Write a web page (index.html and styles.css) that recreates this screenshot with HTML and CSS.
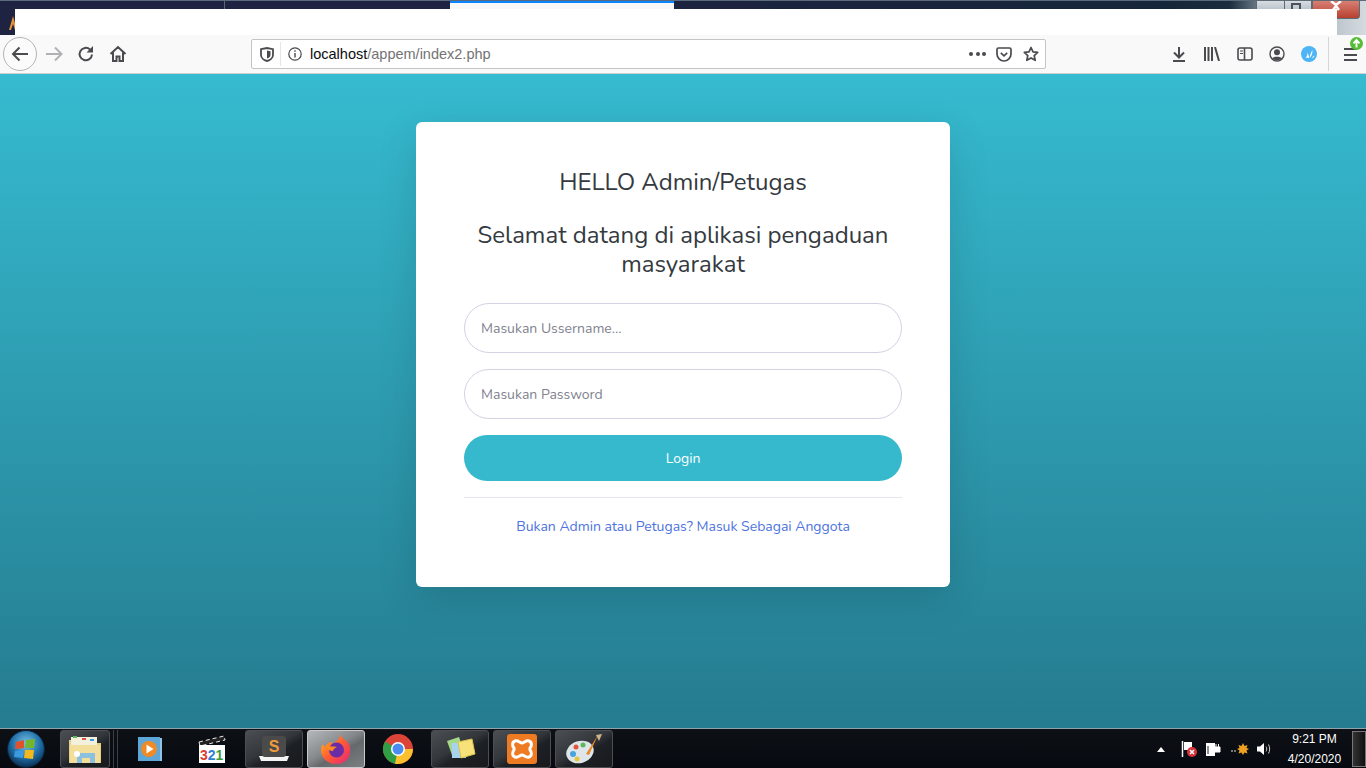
FILE: index.html
```html
<!DOCTYPE html>
<html lang="id">
<head>
<meta charset="utf-8">
<title>Login</title>
<link rel="stylesheet" href="styles.css">
</head>
<body>
<div class="screen">
  <header class="chrome">
    <div class="titlebar">
      <div class="tabstrip">
        <i class="tab-line tl-a"></i><i class="tab-line tl-b"></i>
        <div class="active-tab"></div>
        <div class="winbtns">
          <span class="wb wb-min"></span>
          <span class="wb wb-max"><i></i></span>
          <span class="wb wb-close">
            <svg width="14" height="10" viewBox="0 0 14 10"><path d="M2 0l5 4 5-4M4 9l3-4 3 4" fill="none" stroke="#fff" stroke-width="2.4"/></svg>
          </span>
        </div>
      </div>
      <div class="whiteband">
        <svg class="app-mark" width="8" height="14" viewBox="0 0 8 14"><path d="M4 0L8 14H6L4 8 2 14H0z" fill="#e0913a"/></svg>
        <div class="whitefill"></div>
      </div>
    </div>
    <div class="toolbar">
      <div class="backbtn">
        <svg width="22" height="22" viewBox="0 0 22 22"><path d="M19 11H4M10.500 4.500L4 11l6.500 6.500" fill="none" stroke="#4a4a4f" stroke-width="2"/></svg>
      </div>
      <svg class="tb tb-fwd" width="20" height="20" viewBox="0 0 20 20"><path d="M2 10h15M11 3.500L17.500 10 11 16.500" fill="none" stroke="#b1b1b3" stroke-width="2"/></svg>
      <svg class="tb tb-reload" width="18" height="18" viewBox="0 0 18 18"><path d="M15 9.500A6.200 6.200 0 1 1 13 4.500" fill="none" stroke="#4a4a4f" stroke-width="2"/><path d="M16 1v6.500H9.500z" fill="#4a4a4f"/></svg>
      <svg class="tb tb-home" width="18" height="18" viewBox="0 0 18 18"><path d="M1.500 9L9 2l7.500 7M4 7.500V16h3.500v-4.500h3V16H14V7.500" fill="none" stroke="#4a4a4f" stroke-width="2"/></svg>
      <div class="urlbar">
        <svg class="shield" width="14" height="15" viewBox="0 0 14 15"><path d="M1 2.200L7 1l6 1.200V8c0 3-3 5.300-6 6-3-.7-6-3-6-6z" fill="none" stroke="#4a4a4f" stroke-width="1.800"/><path d="M7 3.500l3.500.7V8c0 1.700-1.700 3-3.500 3.500z" fill="#4a4a4f"/></svg>
        <i class="url-sep"></i>
        <svg class="info" width="14" height="14" viewBox="0 0 14 14"><circle cx="7" cy="7" r="6.200" fill="none" stroke="#4a4a4f" stroke-width="1.200"/><path d="M7 6v4.500M7 3.200v1.600" stroke="#4a4a4f" stroke-width="1.400"/></svg>
        <span class="url"><b>localhost</b>/appem/index2.php</span>
        <span class="url-dots"><i></i><i></i><i></i></span>
        <svg class="pocket" width="16" height="15" viewBox="0 0 16 15"><path d="M1 2.500C1 1.500 1.700 1 2.500 1h11c.8 0 1.500.5 1.500 1.500V7c0 3.700-3.200 7-7 7S1 10.700 1 7z" fill="none" stroke="#4a4a4f" stroke-width="1.700"/><path d="M4.800 5.800L8 8.800l3.200-3" fill="none" stroke="#4a4a4f" stroke-width="1.700"/></svg>
        <svg class="star" width="16" height="16" viewBox="0 0 16 16"><path d="M8 1.500l2 4.400 4.700.5-3.500 3.200 1 4.700L8 11.900l-4.200 2.400 1-4.700L1.300 6.400 6 5.900z" fill="none" stroke="#4a4a4f" stroke-width="1.700" stroke-linejoin="round"/></svg>
      </div>
      <div class="tools">
        <svg class="t-dl" width="14" height="16" viewBox="0 0 14 16"><path d="M7 1v10M2 6.500L7 11.500l5-5M1 15h12" fill="none" stroke="#4a4a4f" stroke-width="2"/></svg>
        <svg class="t-lib" width="16" height="14" viewBox="0 0 16 14"><path d="M1 0v14M4.500 0v14M8 0v14M11 0l4 14" fill="none" stroke="#4a4a4f" stroke-width="2"/></svg>
        <svg class="t-side" width="16" height="14" viewBox="0 0 16 14"><rect x="1" y="1" width="14" height="12" rx="2" fill="none" stroke="#4a4a4f" stroke-width="1.600"/><path d="M7.500 1v12" stroke="#4a4a4f" stroke-width="1.600"/><path d="M3 4h3M3 6.500h3" stroke="#4a4a4f"/></svg>
        <svg class="t-acct" width="16" height="16" viewBox="0 0 16 16"><circle cx="8" cy="8" r="7" fill="none" stroke="#4a4a4f" stroke-width="1.400"/><circle cx="8" cy="6.200" r="3" fill="#4a4a4f"/><path d="M3 12.500C4 10 12 10 13 12.500 11 14.600 5 14.600 3 12.500z" fill="#4a4a4f"/></svg>
        <svg class="t-ext" width="16" height="16" viewBox="0 0 16 16"><circle cx="8" cy="8" r="8" fill="#4db4f5"/><path d="M4 11.500C5.500 11.500 6.500 10 6.500 6.500 7.500 9 8 10 8 12zM8.500 12C9 9 10 6 11.500 4 11.500 7 11 10 8.500 12zM11 12c.5-1 1.500-2 2.500-2.500-.3 1.500-1 2.200-2.500 2.500z" fill="#fff"/></svg>
        <i class="tool-sep"></i>
        <div class="menu">
          <span class="bars"><i></i><i></i><i></i></span>
          <svg class="update" width="13" height="13" viewBox="0 0 13 13"><circle cx="6.500" cy="6.500" r="6.500" fill="#57bd35"/><path d="M6.500 10.500V3.500M3.500 6.300L6.500 3l3 3.300" fill="none" stroke="#fff" stroke-width="1.900"/></svg>
        </div>
      </div>
    </div>
  </header>

  <main class="page">
    <section class="card">
      <h1 class="hello">HELLO Admin/Petugas</h1>
      <h2 class="welcome">Selamat datang di aplikasi pengaduan masyarakat</h2>
      <form class="form">
        <input class="field" type="text" placeholder="Masukan Ussername...">
        <input class="field" type="password" placeholder="Masukan Password">
        <button class="login" type="button">Login</button>
      </form>
      <hr class="rule">
      <a class="member" href="#">Bukan Admin atau Petugas? Masuk Sebagai Anggota</a>
    </section>
  </main>

  <footer class="taskbar">
    <div class="start">
      <svg width="40" height="40" viewBox="0 0 40 40">
        <defs><radialGradient id="orb" cx="50%" cy="35%" r="65%"><stop offset="0" stop-color="#7cc4e8"/><stop offset=".6" stop-color="#1d6da6"/><stop offset="1" stop-color="#0c2d52"/></radialGradient></defs>
        <circle cx="20" cy="20" r="18.500" fill="url(#orb)" stroke="#0a2238"/>
        <path d="M10 13l8-2v8l-9 1z" fill="#e2512c"/><path d="M20 11l9-1-1 9-9 0z" fill="#74b72c"/><path d="M9 22l9-1-1 8-9-1z" fill="#3b9ae0"/><path d="M19 21l9 0-1 9-9-1z" fill="#f3b81e"/>
      </svg>
    </div>
    <div class="tbtn tbtn-first">
      <svg width="34" height="32" viewBox="0 0 34 32"><path d="M1 7h11l2 3h19v20H1z" fill="#e8cf7f"/><rect x="3" y="4" width="26" height="10" fill="#f3f0dc"/><rect x="5" y="3" width="4" height="2" fill="#5cb85c"/><rect x="14" y="5" width="4" height="2" fill="#d9534f"/><rect x="22" y="6" width="4" height="2" fill="#3b9ae0"/><path d="M2 12h30v18H2z" fill="#f3df9b"/><path d="M9 30v-10h18v10h-5v-5h-8v5z" fill="#8cc0df"/><circle cx="9" cy="21" r="3" fill="#fff"/></svg>
    </div>
    <i class="tsep"></i>
    <div class="tslot">
      <svg width="26" height="28" viewBox="0 0 26 28"><rect x="5" y="3" width="20" height="23" fill="#8fc3e6"/><rect x="1" y="2" width="22" height="24" fill="#5ca7d8"/><circle cx="12" cy="14" r="8" fill="#f08a24"/><path d="M9.500 9.500l7 4.500-7 4.500z" fill="#fff"/></svg>
    </div>
    <div class="tslot tslot-mpc">
      <svg width="30" height="30" viewBox="0 0 30 30"><path d="M2 8L27 2l1 4L3 12z" fill="#222" stroke="#eee" stroke-dasharray="4 3"/><rect x="2" y="11" width="26" height="18" fill="#fff"/><text x="3" y="26" class="mpc-num"><tspan fill="#d9402f">3</tspan><tspan fill="#2f7fd0">2</tspan><tspan fill="#3f9c3a">1</tspan></text></svg>
    </div>
    <div class="tbtn">
      <svg width="32" height="30" viewBox="0 0 32 30"><path d="M1 22l2 5h26l2-5z" fill="#f4f4f4"/><rect x="4" y="2" width="24" height="21" rx="3" fill="#4a4a4a"/><text x="16" y="18" class="sublime">S</text></svg>
    </div>
    <div class="tbtn tbtn-active">
      <svg width="32" height="32" viewBox="0 0 32 32">
        <defs><linearGradient id="fx" x1="0" y1="0" x2="1" y2="1"><stop offset="0" stop-color="#ffc21f"/><stop offset=".5" stop-color="#ff5b32"/><stop offset="1" stop-color="#e8247d"/></linearGradient></defs>
        <path d="M20 1c1 4 6 6 9 10 3 7 1 20-13 20C7 31 1 24 1 17c0-3 1-5 2-6 0 1 1 2 2 3 1-3 4-5 7-5-1 1 0 1 1 2 3-3 7-4 7-10z" fill="url(#fx)"/><circle cx="16.500" cy="17" r="7.500" fill="#6b2ca5"/><path d="M6 12c3 2 8 1 11 2-2 1-4 2-4 4-3 0-6-2-7-6z" fill="#ff8a1f"/>
      </svg>
    </div>
    <div class="tslot">
      <svg width="32" height="32" viewBox="0 0 32 32"><circle cx="16" cy="16" r="15" fill="#db4437"/><path d="M16 16L3 8.500A15 15 0 0 0 16 31z" fill="#2f9e44"/><path d="M16 16h15A15 15 0 0 1 13 30.700z" fill="#fbc02d"/><circle cx="16" cy="16" r="7" fill="#fff"/><circle cx="16" cy="16" r="5.500" fill="#4a8cf0"/></svg>
    </div>
    <div class="tbtn">
      <svg width="32" height="28" viewBox="0 0 32 28"><path d="M3 6l12-4 5 14-12 4z" fill="#a5d98a"/><rect x="8" y="8" width="14" height="15" fill="#a8d3ee"/><path d="M14 7l14-3 3 15-14 4z" fill="#f7e27a" stroke="#d8c24e"/></svg>
    </div>
    <div class="tbtn">
      <svg width="32" height="32" viewBox="0 0 32 32"><rect x="1" y="1" width="30" height="30" rx="3" fill="#ee7a22"/><path d="M9 8c3-1 5 2 7 2s4-3 7-2c3 1 3 5 1 7 0 1 0 1 0 2 2 2 2 6-1 7-3 1-5-2-7-2s-4 3-7 2c-3-1-3-5-1-7v-2c-2-2-2-6 1-7z" fill="none" stroke="#fff" stroke-width="3"/></svg>
    </div>
    <div class="tbtn">
      <svg width="38" height="32" viewBox="0 0 38 32"><ellipse cx="15" cy="19" rx="14" ry="11" fill="#dfe6ea" transform="rotate(-18 15 19)"/><circle cx="8" cy="21" r="3" fill="#4aa3df"/><circle cx="11" cy="14" r="2.500" fill="#e0533c"/><circle cx="18" cy="12" r="2.500" fill="#5cb85c"/><circle cx="12" cy="26" r="2.500" fill="#e9c53a"/><path d="M33 2L24 22l-3-1z" fill="#e68a2e"/><path d="M31 2l6-1-3 7z" fill="#cdb48a"/></svg>
    </div>
    <div class="tray">
      <svg class="tr-up" width="8" height="5" viewBox="0 0 8 5"><path d="M4 0l4 5H0z" fill="#fff"/></svg>
      <svg class="tr-flag" width="16" height="18" viewBox="0 0 16 18"><path d="M1.500 1v16" stroke="#fff" stroke-width="1.500"/><path d="M3 2h8v8H3z" fill="#fff"/><circle cx="11" cy="12" r="5" fill="#d8323a"/><path d="M9 10l4 4M13 10l-4 4" stroke="#fff" stroke-width="1.500"/></svg>
      <svg class="tr-pow" width="16" height="16" viewBox="0 0 16 16"><rect x="1" y="2" width="9" height="13" fill="#fff"/><path d="M9 6h6v5H9zM11 3v3M13.500 3v3" fill="#fff" stroke="#fff"/><path d="M3 5v8" stroke="#222"/></svg>
      <svg class="tr-net" width="18" height="12" viewBox="0 0 18 12"><path d="M0 8h6" stroke="#777" stroke-width="2" stroke-dasharray="2 1"/><path d="M12 0l1.500 3 3-1-1 3 2.500 1-2.500 1.500 1 3-3-1L12 12l-1.500-2.500-3 1 1-3L6 6l2.500-1-1-3 3 1z" fill="#f0a020"/></svg>
      <svg class="tr-vol" width="14" height="14" viewBox="0 0 14 14"><path d="M0 4.500h3L7 1v12L3 9.500H0z" fill="#fff"/><path d="M9 4.500c1 1.500 1 3.500 0 5M11.500 2.500c1.500 2.500 1.500 6.500 0 9" fill="none" stroke="#ccc"/></svg>
      <div class="clock"><span>9:21 PM</span><span>4/20/2020</span></div>
      <div class="showdesk"></div>
    </div>
  </footer>
</div>
</body>
</html>
```

FILE: styles.css
```css
* { box-sizing: border-box; }
html, body { margin: 0; height: 100%; overflow: hidden; }
body { font-family: "Nunito", "Lato", "Liberation Sans", sans-serif; }
.screen { display: flex; flex-direction: column; width: 1366px; height: 768px; }

/* browser frame */
.chrome { flex: none; }
.titlebar { height: 35px; background: linear-gradient(90deg, #1d2340 0, #1d2340 45%, #16263a 85%, #1a2c3e 90%, #8e9ca8 93%, #d4dadf 100%); display: flex; flex-direction: column; position: relative; }
.tabstrip { height: 9px; display: flex; position: relative; border-top: 1px solid #5b6b7c; }
.tab-line { position: absolute; top: 0; bottom: 0; width: 1px; background: #5c6472; }
.tl-a { left: 224px; }
.tl-b { display: none; }
.active-tab { position: absolute; left: 450px; width: 224px; top: 0; bottom: 0; background: #f9f9fa; border-top: 2px solid #0a84ff; }
.winbtns { position: absolute; right: 0; top: -1px; display: flex; z-index: 2; }
.wb { display: block; height: 19px; border: 1px solid #5d6b75; border-radius: 0 0 3px 3px; position: relative; background: linear-gradient(#d8dde2, #9da9b3); }
.wb-min { width: 29px; margin-right: -1px; }
.wb-max { width: 28px; }
.wb-max i { position: absolute; left: 6px; top: 2px; width: 10px; height: 8px; border: 2px solid #4a525a; }
.wb-close { width: 48px; margin-right: 6px; height: 19px; background: linear-gradient(#d78074, #b8402f); display: flex; justify-content: center; align-items: flex-start; }
.whiteband { height: 26px; display: flex; align-items: center; position: relative; z-index: 3; }
.app-mark { width: 8px; margin-left: 9px; flex: none; margin-top: 2px; margin-right: -2px; }
.whitefill { margin-left: 0; width: 1322px; height: 26px; background: #fff; }

.toolbar { height: 39px; background: #f9f9fa; border-bottom: 1px solid #d0d0d2; display: flex; align-items: center; padding-left: 3px; }
.backbtn { width: 34px; height: 34px; border: 1px solid #b5b5b7; border-radius: 50%; background: #fbfbfb; display: flex; align-items: center; justify-content: center; flex: none; }
.tb { flex: none; }
.tb-fwd { margin-left: 7px; }
.tb-reload { margin-left: 13px; }
.tb-home { margin-left: 14px; }
.urlbar { width: 795px; height: 30px; margin-left: 124px; background: #fff; border: 1px solid #c4c4c6; border-radius: 2px; display: flex; align-items: center; padding-left: 8px; flex: none; }
.shield { flex: none; }
.url-sep { width: 1px; height: 24px; background: #e6e6e8; margin-left: 6px; }
.info { margin-left: 7px; flex: none; }
.url { margin-left: 8px; font: 14.500px "Liberation Sans", sans-serif; letter-spacing: 0; color: #737373; flex: 1; white-space: nowrap; }
.url b { font-weight: 400; color: #0c0c0d; }
.url-dots { display: flex; gap: 2.500px; margin-right: 10px; }
.url-dots i { width: 4px; height: 4px; border-radius: 50%; background: #4a4a4f; }
.pocket { margin-right: 11px; flex: none; }
.star { margin-right: 6px; flex: none; }
.tools { display: flex; align-items: center; margin-left: 126px; flex: 1; }
.t-dl { flex: none; }
.t-lib { margin-left: 18px; flex: none; }
.t-side { margin-left: 17px; flex: none; }
.t-acct { margin-left: 16px; flex: none; }
.t-ext { margin-left: 16px; flex: none; }
.tool-sep { width: 1px; height: 34px; background: #d6d6d8; margin-left: 11px; }
.menu { position: relative; margin-left: 15px; width: 13px; height: 14px; }
.bars { display: flex; flex-direction: column; gap: 3.500px; margin-top: 1px; }
.bars i { height: 2px; background: #4a4a4f; display: block; }
.update { position: absolute; left: 6px; top: -10px; }

/* page */
.page { height: 654px; flex: none; background: linear-gradient(#36bbd0, #257b8f); padding-top: 48px; display: flex; justify-content: center; }
.card { width: 534px; height: 465px; margin-left: 0; background: #fff; border-radius: 6px; padding: 46px 48px 0; box-shadow: 0 12px 40px rgba(0,0,0,.13); text-align: center; position: relative; left: 0; }
.hello, .welcome { margin: 0; font-weight: 400; font-size: 24px; line-height: 29px; color: #343a40; }
.welcome { margin-top: 24px; }
.form { display: flex; flex-direction: column; gap: 16px; margin-top: 24px; }
.field { width: 100%; height: 50px; border: 1px solid #d1d3e2; border-radius: 25px; padding: 0 16px; font: 14px "Nunito", "Lato", sans-serif; color: #6e707e; background: #fff; outline: none; }
.field::placeholder { color: #7f828f; opacity: 1; }
.login { height: 46px; border: 0; border-radius: 23px; background: #36b9cc; color: #fff; font: 14px "Nunito", "Lato", sans-serif; }
.rule { border: 0; border-top: 1px solid #e3e6f0; margin: 16px 0 0; }
.member { display: block; margin-top: 20px; font-size: 14px; line-height: 17px; color: #4e73df; text-decoration: none; }

/* taskbar */
.taskbar { flex: 1; background: linear-gradient(#0d1015, #060a10); border-top: 1px solid #8fa3ac; display: flex; align-items: center; padding-bottom: 1px; }
.start { width: 54px; padding-left: 6px; display: flex; flex: none; margin-right: 6px; }
.tbtn, .tslot { height: 38px; display: flex; align-items: center; justify-content: center; flex: none; width: 58px; margin-right: 4px; }
.tbtn { border: 1px solid #4b4f54; border-radius: 3px; background: linear-gradient(150deg, #4b4e52 0, #33363a 45%, #1d2024 60%, #17191d 100%); }
.tbtn-first { width: 50px; margin-right: 3px; }
.tsep { width: 5px; height: 38px; border-left: 1px solid #3c4046; border-right: 1px solid #3c4046; flex: none; margin-right: 3px; }
.tslot-mpc { margin-right: 4px; }
.tbtn-active { background: linear-gradient(150deg, #b5b8ba 0, #85888a 45%, #66696c 60%, #7d8082 100%); border-color: #c8cacb; }
.mpc-num { font: 700 14px "Liberation Sans", sans-serif; }
.sublime { font: 700 16px "Liberation Sans", sans-serif; fill: #f09a3a; text-anchor: middle; }
.tray { margin-left: auto; display: flex; align-items: center; height: 100%; }
.tr-up { flex: none; margin-right: 16px; }
.tr-flag { flex: none; margin-right: 8px; }
.tr-pow { flex: none; margin-right: 10px; }
.tr-net { flex: none; margin-right: 8px; }
.tr-vol { flex: none; margin-right: 17px; }
.clock { display: flex; flex-direction: column; align-items: center; width: 53px; margin-right: 11px; font: 12px/20px "Liberation Sans", sans-serif; color: #fff; }
.showdesk { width: 14px; height: 36px; border: 1px solid #777; background: linear-gradient(90deg, #333, #111); }
```
